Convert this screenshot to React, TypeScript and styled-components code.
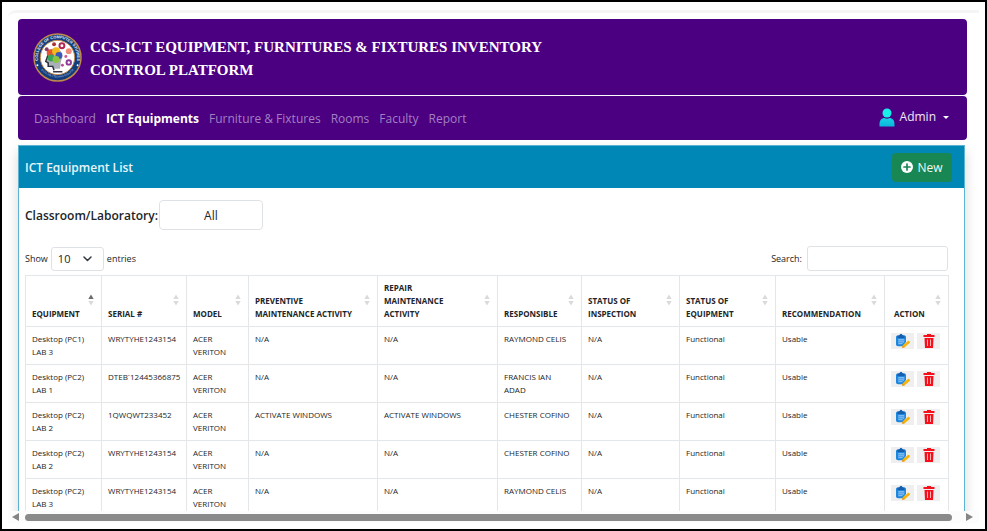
import React from "react";
import styled, { createGlobalStyle } from "styled-components";

const sans = `"Open Sans", "Noto Sans", sans-serif`;

const Global = createGlobalStyle`
  *, *::before, *::after { box-sizing: border-box; }
  body { margin: 0; background: #fff; color: #212529; font-family: ${sans}; }
  button, input, select { font-family: inherit; color: inherit; }
`;

const Frame = styled.div`
  display: flex;
  flex-direction: column;
  height: 100vh;
  padding: 8px 6px 6px;
  border: 2px solid #000;
  overflow: hidden;
`;

const Viewport = styled.div`
  flex: 1;
  min-height: 0;
  overflow: hidden;
  padding: 6px 12px 0 10px;
  border-top: 3px solid #f5f5f5;
  border-radius: 8px 0 0 0;
`;

const Banner = styled.header`
  display: flex;
  align-items: center;
  gap: 8px;
  min-height: 76px;
  padding: 0 15px;
  border-radius: 4px;
  background: #4b0082;
`;

const Title = styled.h1`
  margin: 0;
  padding-top: 4px;
  max-width: 480px;
  color: #fff;
  font: bold 15px/23px "Liberation Serif", serif;
`;

const Nav = styled.nav`
  display: flex;
  align-items: center;
  gap: 10px;
  min-height: 44px;
  margin-top: 1px;
  padding: 2px 16px 0;
  border-radius: 4px;
  background: #4b0082;
`;

const NavLink = styled.a<{ $active?: boolean }>`
  color: ${(p) => (p.$active ? "#fff" : "#a37fc1")};
  font-size: 12px;
  font-weight: ${(p) => (p.$active ? 700 : 400)};
  line-height: 18px;
  text-decoration: none;
`;

const Account = styled.button`
  display: flex;
  align-items: center;
  gap: 5px;
  margin: 0 2px 4px auto;
  padding: 0;
  border: 0;
  background: none;
  color: #efe8f5;
  font-size: 12px;
  line-height: 18px;
`;

const Caret = styled.span`
  margin-left: 2px;
  border: 3px solid transparent;
  border-top-color: #fff;
  border-bottom: 0;
`;

const Card = styled.main`
  margin: 5px 2px 0 0;
  border: 1px solid #5db4d2;
  box-shadow: 0 6px 12px rgba(0, 0, 0, 0.16);
`;

const CardHeader = styled.div`
  display: flex;
  align-items: center;
  justify-content: space-between;
  min-height: 42px;
  padding: 0 12px 0 6px;
  background: #0087b5;
`;

const CardTitle = styled.h2`
  margin: 0;
  color: #e8f5fa;
  font-size: 12px;
  font-weight: 600;
`;

const NewButton = styled.button`
  display: flex;
  align-items: center;
  justify-content: center;
  gap: 4px;
  width: 60px;
  height: 29px;
  padding: 0;
  border: 0;
  border-radius: 4px;
  background: #198754;
  color: #f1f8f5;
  font-size: 12px;
`;

const CardBody = styled.div`
  padding: 12px 16px 0 6px;
`;

const FilterRow = styled.div`
  display: flex;
  align-items: center;
  gap: 1px;
`;

const FilterLabel = styled.label`
  font-size: 12px;
  font-weight: 600;
`;

const RoomSelect = styled.select`
  appearance: none;
  width: 104px;
  height: 30px;
  padding: 0;
  border: 1px solid #dee2e6;
  border-radius: 4px;
  background: #fff;
  font-size: 12px;
  text-align: center;
  text-align-last: center;
`;

const Tools = styled.div`
  display: flex;
  align-items: center;
  justify-content: space-between;
  margin: 16px 0 4px;
  font-size: 9px;
`;

const ToolGroup = styled.label`
  display: flex;
  align-items: center;
  gap: 3px;
`;

const SearchGroup = styled(ToolGroup)`
  gap: 5px;
`;

const LengthWrap = styled.span`
  position: relative;
  display: flex;

  svg {
    position: absolute;
    top: 8px;
    right: 12px;
    pointer-events: none;
  }
`;

const LengthSelect = styled.select`
  appearance: none;
  width: 53px;
  height: 24px;
  padding: 0 6px;
  border: 1px solid #dee2e6;
  border-radius: 3px;
  background: #fff;
  font-size: 11px;
`;

const SearchInput = styled.input`
  width: 141px;
  height: 25px;
  padding: 0 6px;
  border: 1px solid #dee2e6;
  border-radius: 3px;
  font-size: 11px;
`;

const Table = styled.table`
  width: 100%;
  table-layout: fixed;
  border-collapse: collapse;
  font-size: 8px;
  line-height: 13px;
`;

const Col = styled.col<{ $w: number }>`
  width: ${(p) => p.$w}px;
`;

const Th = styled.th<{ $inset?: boolean }>`
  position: relative;
  padding: 5px 24px 6px ${(p) => (p.$inset ? 9 : 6)}px;
  border: 1px solid #e4e7ea;
  font-weight: 700;
  text-align: left;
  vertical-align: bottom;
`;

const SortMark = styled.svg`
  position: absolute;
  right: 7px;
  bottom: 20px;
`;

const Td = styled.td`
  padding: 5px 8px 6px 6px;
  border: 1px solid #e4e7ea;
  vertical-align: top;
`;

const Actions = styled.div`
  display: flex;
  gap: 3px;
  padding-top: 1px;
`;

const IconButton = styled.button`
  display: flex;
  flex: none;
  align-items: center;
  justify-content: center;
  width: 23px;
  height: 16px;
  padding: 0;
  border: 0;
  background: #efefef;
`;

const ScrollBar = styled.div`
  display: flex;
  align-items: center;
  gap: 6px;
  height: 12px;
  padding: 0 6px 0 4px;
  background: #fcfcfc;
`;

const Track = styled.div`
  flex: 1;
  padding-right: 8px;
`;

const Thumb = styled.div`
  height: 7px;
  border-radius: 4px;
  background: #8a8a8a;
`;

const Logo = () => (
  <svg width="49" height="49" viewBox="0 0 100 100" aria-label="College of Computer Studies">
    <defs>
      <path id="arcTop" d="M13 66 A40 40 0 1 1 87 66" />
      <path id="arcBottom" d="M12 68 A43 43 0 0 0 88 68" />
    </defs>
    <circle cx="50" cy="50" r="48" fill="#123c7c" stroke="#c08a4a" strokeWidth="3" />
    <circle cx="50" cy="50" r="35" fill="#fff" stroke="#c08a4a" strokeWidth="2" />
    <text fill="#e9eef6" fontFamily="Liberation Sans, sans-serif" fontWeight="700" fontSize="8">
      <textPath href="#arcTop" startOffset="50%" textAnchor="middle">COLLEGE OF COMPUTER STUDIES</textPath>
    </text>
    <text fill="#b9c8e0" fontFamily="Liberation Sans, sans-serif" fontSize="5">
      <textPath href="#arcBottom" startOffset="50%" textAnchor="middle">BICOL POLYTECHNIC COLLEGE</textPath>
    </text>
    <circle cx="9" cy="66" r="2" fill="#fff" />
    <circle cx="91" cy="66" r="2" fill="#fff" />
    <path d="M31 38 Q42 25 56 36 Q63 45 57 58 L55 73 H42 L40 66 H31 L28 57 Z" fill="#aab0bb" />
    <path d="M31 44 L26 58 L31 61 V68 H40 L43 76" fill="none" stroke="#2b2f3a" strokeWidth="3" />
    <circle cx="36" cy="41" r="8" fill="#e2572b" />
    <circle cx="47" cy="37" r="8" fill="#f1b91e" />
    <circle cx="53" cy="46" r="7" fill="#3a57b8" />
    <circle cx="37" cy="51" r="7" fill="#35a65a" />
    <circle cx="47" cy="54" r="7" fill="#8bc53f" />
    <circle cx="59" cy="26" r="5" fill="none" stroke="#b32650" strokeWidth="4" />
    <circle cx="73" cy="37" r="6" fill="#f28a78" />
    <circle cx="73" cy="60" r="4.500" fill="none" stroke="#8c3a9a" strokeWidth="4" />
    <circle cx="67" cy="48" r="3" fill="#d85a8a" />
    <circle cx="60" cy="66" r="3" fill="#c04aa0" />
    <circle cx="28" cy="33" r="4" fill="#8c3a6a" />
    <circle cx="43" cy="23" r="4" fill="#a33" />
    <path d="M41 79 H60" stroke="#334" strokeWidth="3" />
  </svg>
);

const UserIcon = () => (
  <svg width="16" height="19" viewBox="0 0 16 19" aria-hidden="true">
    <defs>
      <linearGradient id="userFill" x1="0" y1="0" x2="0" y2="1">
        <stop offset="0" stopColor="#17d2e4" />
        <stop offset="1" stopColor="#0cb4dc" />
      </linearGradient>
    </defs>
    <circle cx="8" cy="5" r="4.500" fill="#19eee8" />
    <path d="M0.500 18.500 V16 C0.500 12 3 10 5.500 10 Q8 11.500 10.500 10 C13 10 15.500 12 15.500 16 V18.500 Z" fill="url(#userFill)" />
  </svg>
);

const PlusIcon = () => (
  <svg width="12" height="12" viewBox="0 0 12 12" aria-hidden="true">
    <circle cx="6" cy="6" r="6" fill="#fff" />
    <path d="M6 3 V9 M3 6 H9" stroke="#198754" strokeWidth="1.700" strokeLinecap="round" />
  </svg>
);

const ChevronIcon = () => (
  <svg width="9" height="8" viewBox="0 0 9 8" aria-hidden="true">
    <path d="M1 2 L4.500 5.500 L8 2" fill="none" stroke="#343a40" strokeWidth="1.500" strokeLinecap="round" strokeLinejoin="round" />
  </svg>
);

const EditIcon = () => (
  <svg width="16" height="16" viewBox="0 0 16 16" aria-hidden="true">
    <path d="M1 4 Q1 2.500 2.500 2.500 H4 L6 0.800 L8 2.500 H9.500 Q11 2.500 11 4 V9 L7.500 13.200 H3 Q1 13.200 1 11.500 Z" fill="#1f86de" />
    <path d="M2.500 5 V2.500 H4 L6 0.800 L8 2.500 H9.500 V5 Z" fill="#155fae" />
    <path d="M3.300 6 H9.300 V9 L7 11.300 H3.300 Z" fill="#7dbcf2" />
    <path d="M3.500 7.700 H9 M3.500 9.500 H8" stroke="#3b93e0" strokeWidth="0.700" />
    <path d="M9 13 L13.500 9.200" stroke="#f5b40c" strokeWidth="2.800" strokeLinecap="round" />
    <path d="M7 14.900 L7.600 12.300 L9.900 14.300 Z" fill="#e39a12" />
  </svg>
);

const TrashIcon = () => (
  <svg width="12" height="16" viewBox="0 0 12 16" aria-hidden="true">
    <path d="M4 2 V1 H8 V2 H11.500 V4 H0.500 V2 Z" fill="#f6101b" />
    <path d="M1.500 5 H10.500 L10 15 H2 Z" fill="#f6101b" />
    <path d="M4.500 6.500 V13 M7.500 6.500 V13" stroke="#ffc4c4" strokeWidth="0.900" />
  </svg>
);

const Arrow = ({ d }: { d: string }) => (
  <svg width="7" height="8" viewBox="0 0 7 8" aria-hidden="true">
    <path d={d} fill="#858585" />
  </svg>
);

const columns = [
  { label: "EQUIPMENT", w: 76 },
  { label: "SERIAL #", w: 85 },
  { label: "MODEL", w: 62 },
  { label: "PREVENTIVE MAINTENANCE ACTIVITY", w: 129 },
  { label: "REPAIR MAINTENANCE ACTIVITY", w: 120 },
  { label: "RESPONSIBLE", w: 84 },
  { label: "STATUS OF INSPECTION", w: 98 },
  { label: "STATUS OF EQUIPMENT", w: 96 },
  { label: "RECOMMENDATION", w: 109 },
  { label: "ACTION", w: 64 },
];

const rows = [
  ["Desktop (PC1) LAB 3", "WRYTYHE1243154", "ACER VERITON", "N/A", "N/A", "RAYMOND CELIS", "N/A", "Functional", "Usable"],
  ["Desktop (PC2) LAB 1", "DTEB`12445366875", "ACER VERITON", "N/A", "N/A", "FRANCIS IAN ADAD", "N/A", "Functional", "Usable"],
  ["Desktop (PC2) LAB 2", "1QWQWT233452", "ACER VERITON", "ACTIVATE WINDOWS", "ACTIVATE WINDOWS", "CHESTER COFINO", "N/A", "Functional", "Usable"],
  ["Desktop (PC2) LAB 2", "WRYTYHE1243154", "ACER VERITON", "N/A", "N/A", "CHESTER COFINO", "N/A", "Functional", "Usable"],
  ["Desktop (PC2) LAB 3", "WRYTYHE1243154", "ACER VERITON", "N/A", "N/A", "RAYMOND CELIS", "N/A", "Functional", "Usable"],
];

const links = ["Dashboard", "ICT Equipments", "Furniture & Fixtures", "Rooms", "Faculty", "Report"];

export default function App() {
  return (
    <>
      <Global />
      <Frame>
        <Viewport>
          <Banner>
            <Logo />
            <Title>CCS-ICT EQUIPMENT, FURNITURES &amp; FIXTURES INVENTORY CONTROL PLATFORM</Title>
          </Banner>
          <Nav>
            {links.map((l) => (
              <NavLink key={l} href="#" $active={l === "ICT Equipments"}>{l}</NavLink>
            ))}
            <Account type="button">
              <UserIcon />
              Admin
              <Caret />
            </Account>
          </Nav>
          <Card>
            <CardHeader>
              <CardTitle>ICT Equipment List</CardTitle>
              <NewButton type="button"><PlusIcon />New</NewButton>
            </CardHeader>
            <CardBody>
              <FilterRow>
                <FilterLabel htmlFor="room">Classroom/Laboratory:</FilterLabel>
                <RoomSelect id="room"><option>All</option></RoomSelect>
              </FilterRow>
              <Tools>
                <ToolGroup>
                  Show
                  <LengthWrap>
                    <LengthSelect><option>10</option></LengthSelect>
                    <ChevronIcon />
                  </LengthWrap>
                  entries
                </ToolGroup>
                <SearchGroup>
                  Search:
                  <SearchInput type="search" />
                </SearchGroup>
              </Tools>
              <Table>
                <colgroup>
                  {columns.map((c) => <Col key={c.label} $w={c.w} />)}
                </colgroup>
                <thead>
                  <tr>
                    {columns.map((c, i) => (
                      <Th key={c.label} scope="col" $inset={c.label === "ACTION"}>
                        {c.label}
                        <SortMark width="6" height="12" viewBox="0 0 6 12" aria-hidden="true">
                          <path d="M3 0.500 L5.700 5 H0.300 Z" fill={i === 0 ? "#6b6e71" : "#d9dadb"} />
                          <path d="M3 11.500 L5.700 7 H0.300 Z" fill="#d9dadb" />
                        </SortMark>
                      </Th>
                    ))}
                  </tr>
                </thead>
                <tbody>
                  {rows.map((r, i) => (
                    <tr key={i}>
                      {r.map((cell, j) => <Td key={j}>{cell}</Td>)}
                      <Td>
                        <Actions>
                          <IconButton type="button" aria-label="Edit"><EditIcon /></IconButton>
                          <IconButton type="button" aria-label="Delete"><TrashIcon /></IconButton>
                        </Actions>
                      </Td>
                    </tr>
                  ))}
                </tbody>
              </Table>
            </CardBody>
          </Card>
        </Viewport>
        <ScrollBar>
          <Arrow d="M7 0 V8 L0 4 Z" />
          <Track><Thumb /></Track>
          <Arrow d="M0 0 V8 L7 4 Z" />
        </ScrollBar>
      </Frame>
    </>
  );
}
